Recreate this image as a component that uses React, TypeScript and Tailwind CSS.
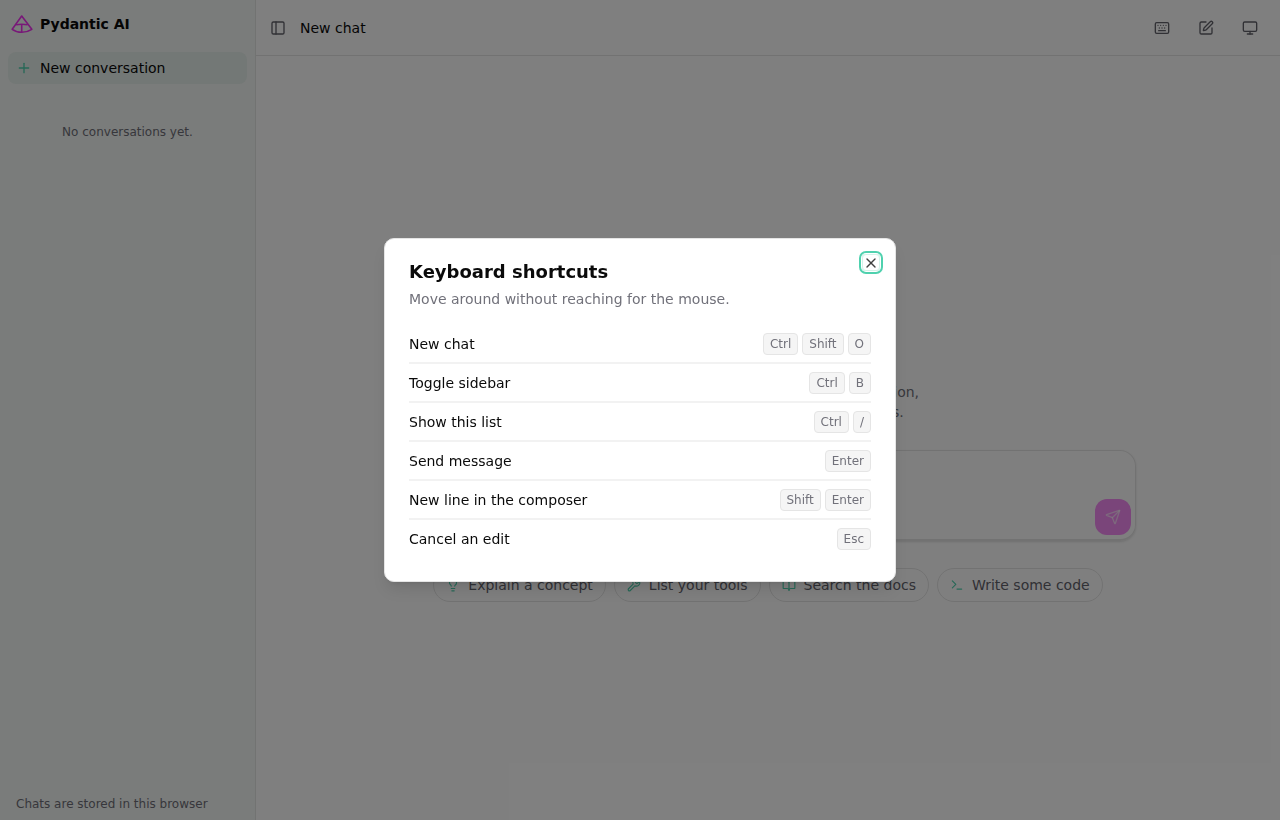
import { BookOpen, Keyboard, Lightbulb, Monitor, PanelLeft, Plus, Send, SquarePen, Terminal, Wrench, X } from 'lucide-react';

const shortcuts = [
  { label: 'New chat', keys: ['Ctrl', 'Shift', 'O'] },
  { label: 'Toggle sidebar', keys: ['Ctrl', 'B'] },
  { label: 'Show this list', keys: ['Ctrl', '/'] },
  { label: 'Send message', keys: ['Enter'] },
  { label: 'New line in the composer', keys: ['Shift', 'Enter'] },
  { label: 'Cancel an edit', keys: ['Esc'] },
];

const suggestions = [
  { label: 'Explain a concept', icon: Lightbulb },
  { label: 'List your tools', icon: Wrench },
  { label: 'Search the docs', icon: BookOpen },
  { label: 'Write some code', icon: Terminal },
];

function Logo() {
  return (
    <svg width="22" height="20" viewBox="0 0 22 20" fill="none" stroke="#f030f0" strokeWidth="1.6" strokeLinejoin="round">
      <path d="M10.7 2 L20.8 15.3 C15 19.2 6.4 19.2 1.2 15.3 Z" />
      <path d="M5 10.8 C8.5 10.1 13 10.1 16.6 10.8" />
      <path d="M10.7 10.4 V18" />
    </svg>
  );
}

export default function App() {
  return (
    <div className="relative flex h-[820px] w-[1280px] overflow-hidden bg-white font-['DejaVu_Sans',sans-serif] text-[#0a0a0a]">
      {/* Sidebar */}
      <aside className="flex w-[256px] shrink-0 flex-col border-r border-[#e4e7e5] bg-[#f5f8f6]">
        <div className="flex h-[48px] items-center gap-[7px] px-[11px]">
          <Logo />
          <span className="text-sm font-bold">Pydantic AI</span>
        </div>
        <div className="px-2 pt-1">
          <button className="flex h-8 w-full items-center gap-2 rounded-lg bg-[#e6f0ec] px-2 text-sm">
            <Plus size={16} className="text-[#4fd1ae]" />
            New conversation
          </button>
        </div>
        <p className="mt-10 text-center text-xs text-[#6f6f78]">No conversations yet.</p>
        <p className="mt-auto px-4 pb-2 text-xs leading-4 text-[#6f6f78]">Chats are stored in this browser</p>
      </aside>

      {/* Main */}
      <main className="flex min-w-0 flex-1 flex-col">
        <header className="flex h-[56px] shrink-0 items-center border-b border-[#e5e5e5] pl-3 pr-[14px]">
          <button className="flex h-5 w-5 items-center justify-center text-[#62626b]">
            <PanelLeft size={16} />
          </button>
          <span className="ml-3 text-sm">New chat</span>
          <div className="ml-auto flex items-center gap-3 text-[#62626b]">
            <button className="flex h-8 w-8 items-center justify-center"><Keyboard size={16} /></button>
            <button className="flex h-8 w-8 items-center justify-center"><SquarePen size={16} /></button>
            <button className="flex h-8 w-8 items-center justify-center"><Monitor size={16} /></button>
          </div>
        </header>

        <div className="flex flex-1 flex-col items-center pt-[326px]">
          <p className="text-center text-sm leading-5 text-[#71717a]">
            Ask a question or start a real conversation,
            <br />
            or pick out some of these suggestions.
          </p>
          <div className="mt-[28px] flex h-[91px] w-[736px] items-end justify-end rounded-2xl border border-b-2 border-[#e5e5e5] p-1 shadow-sm">
            <button className="flex h-9 w-9 items-center justify-center rounded-xl bg-[#f48af4] text-white/60">
              <Send size={16} />
            </button>
          </div>
          <div className="mt-[27px] flex gap-2">
            {suggestions.map((s) => (
              <button key={s.label} className="flex h-[34px] items-center gap-2 rounded-full border border-[#e5e5e5] px-3 text-sm text-[#62626b]">
                <s.icon size={14} className="text-[#4fd1ae]" />
                {s.label}
              </button>
            ))}
          </div>
        </div>
      </main>

      {/* Dialog */}
      <div className="absolute inset-0 flex items-center justify-center bg-black/50">
        <div className="relative w-[512px] rounded-[10px] border border-[#e5e5e5] bg-white p-6 shadow-lg will-change-transform">
          <button className="absolute right-[15px] top-[15px] flex h-[17px] w-[18px] items-center justify-center rounded-[4px] border border-[#d5f3ea] text-[#404040] ring-2 ring-[#4fd1ae] ring-offset-1">
            <X size={16} />
          </button>
          <h2 className="text-lg font-bold leading-[18px]">Keyboard shortcuts</h2>
          <p className="mt-2 text-sm leading-5 text-[#71717a]">Move around without reaching for the mouse.</p>
          <div className="mt-4">
            {shortcuts.map((row, i) => (
              <div
                key={row.label}
                className={i < shortcuts.length - 1 ? 'flex h-[39px] items-center justify-between border-b-2 border-[#f2f2f2]' : 'flex h-[37px] items-center justify-between'}
              >
                <span className="text-sm">{row.label}</span>
                <span className="flex gap-1">
                  {row.keys.map((k) => (
                    <kbd key={k} className="flex h-[22px] items-center justify-center rounded border border-[#e5e5e5] bg-[#f5f5f5] px-[6px] font-['DejaVu_Sans',sans-serif] text-xs text-[#71717a]">
                      {k}
                    </kbd>
                  ))}
                </span>
              </div>
            ))}
          </div>
        </div>
      </div>
    </div>
  );
}
